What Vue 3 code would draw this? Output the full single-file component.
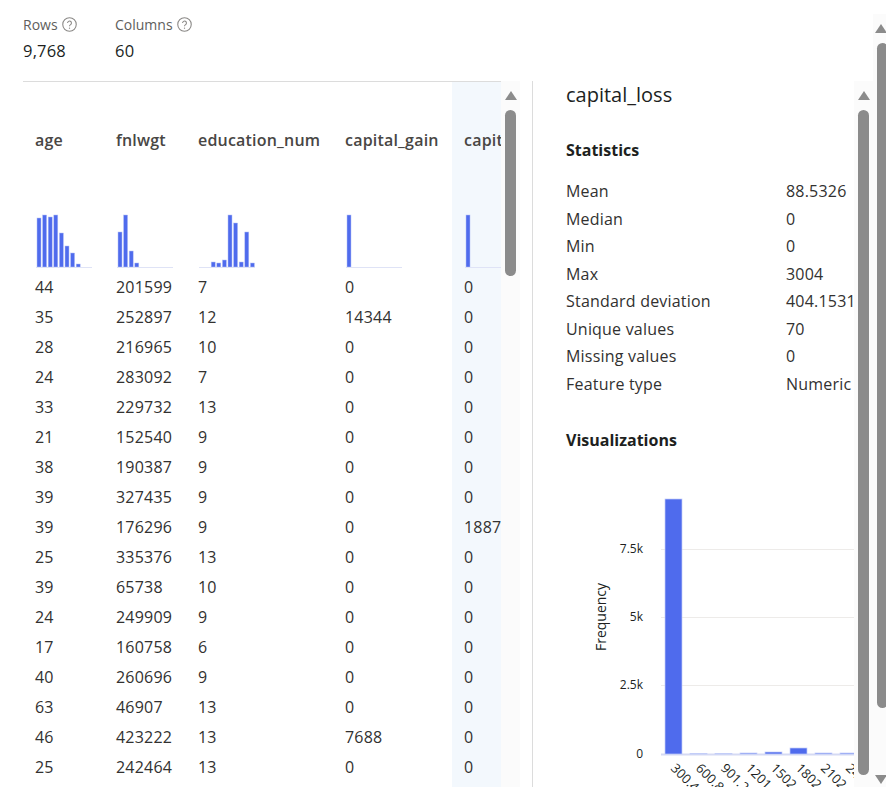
<script setup>
const rows = [
  [44, 201599, 7, 0, 0], [35, 252897, 12, 14344, 0], [28, 216965, 10, 0, 0], [24, 283092, 7, 0, 0],
  [33, 229732, 13, 0, 0], [21, 152540, 9, 0, 0], [38, 190387, 9, 0, 0], [39, 327435, 9, 0, 0],
  [39, 176296, 9, 0, 1887], [25, 335376, 13, 0, 0], [39, 65738, 10, 0, 0], [24, 249909, 9, 0, 0],
  [17, 160758, 6, 0, 0], [40, 260696, 9, 0, 0], [63, 46907, 13, 0, 0], [46, 423222, 13, 7688, 0],
  [25, 242464, 13, 0, 0]
]
const columns = [
  { name: 'age', hist: [49, 52, 50, 52, 34, 21, 14, 3, 0, 0] },
  { name: 'fnlwgt', hist: [35, 52, 16, 4, 0, 0, 0, 0, 0, 0] },
  { name: 'education_num', hist: [0, 0, 5, 4, 7, 52, 44, 5, 35, 4] },
  { name: 'capital_gain', hist: [52, 0, 0, 0, 0, 0, 0, 0, 0, 0] },
  { name: 'capital_loss', hist: [52, 0, 0, 0, 0, 0, 0, 0, 0, 0], active: true }
]
const stats = [
  ['Mean', '88.5326'], ['Median', '0'], ['Min', '0'], ['Max', '3004'],
  ['Standard deviation', '404.1531'], ['Unique values', '70'], ['Missing values', '0'], ['Feature type', 'Numeric']
]
const yTicks = [
  { label: '7.5k', y: 69 }, { label: '5k', y: 137 }, { label: '2.5k', y: 205 }, { label: '0', y: 274 }
]
const chartBars = [255, 0.5, 0.5, 1, 2, 6, 1, 1]
const xLabels = ['300.4', '600.8', '901.2', '1201.6', '1502', '1802.4', '2102.8', '2403.2']
</script>

<template>
  <div class="page">
    <main class="main">
      <header class="summary">
        <div class="metric">
          <div class="metric-label">Rows
            <svg class="help" viewBox="0 0 14 14"><circle cx="7" cy="7" r="6.3" /><path d="M5.2 5.6a1.8 1.8 0 1 1 2.8 1.5c-.7.5-1 .8-1 1.5" /><circle class="dot" cx="7" cy="10.4" r=".6" /></svg>
          </div>
          <div class="metric-value">9,768</div>
        </div>
        <div class="metric">
          <div class="metric-label">Columns
            <svg class="help" viewBox="0 0 14 14"><circle cx="7" cy="7" r="6.3" /><path d="M5.2 5.6a1.8 1.8 0 1 1 2.8 1.5c-.7.5-1 .8-1 1.5" /><circle class="dot" cx="7" cy="10.4" r=".6" /></svg>
          </div>
          <div class="metric-value">60</div>
        </div>
      </header>

      <div class="workspace">
        <section class="table-pane">
          <div class="table">
            <div v-for="(col, c) in columns" :key="col.name" class="col" :class="['col-' + c, { active: col.active }]">
              <div class="col-name">{{ col.name }}</div>
              <svg class="hist" width="57" height="54" viewBox="0 0 57 54">
                <rect v-for="(h, i) in col.hist" :key="i" v-show="h" class="hist-bar" :x="2 + i * 5.6" :y="53 - h" width="4" :height="h" />
                <line class="hist-base" x1="1" y1="53.5" x2="57" y2="53.5" />
              </svg>
              <div v-for="(row, r) in rows" :key="r" class="cell">{{ row[c] }}</div>
            </div>
          </div>
        </section>
        <div class="scrollbar">
          <span class="arrow up"></span>
          <span class="thumb table-thumb"></span>
        </div>

        <section class="detail-pane">
          <h2 class="detail-title">capital_loss</h2>
          <h3 class="section-title stats-title">Statistics</h3>
          <div class="stats">
            <div v-for="s in stats" :key="s[0]" class="stat">
              <span class="stat-key">{{ s[0] }}</span>
              <span class="stat-value">{{ s[1] }}</span>
            </div>
          </div>
          <h3 class="section-title viz-title">Visualizations</h3>
          <svg class="chart" width="288" height="340" viewBox="0 0 288 340">
            <text class="axis-title" transform="translate(40 137) rotate(-90)" text-anchor="middle">Frequency</text>
            <g v-for="t in yTicks" :key="t.label">
              <text class="y-label" x="77" :y="t.y + 4" text-anchor="end">{{ t.label }}</text>
              <line class="grid" :class="{ base: t.label === '0' }" x1="95" :y1="t.y + 0.5" x2="288" :y2="t.y + 0.5" />
            </g>
            <rect v-for="(h, i) in chartBars" :key="'b' + i" class="chart-bar" :x="99 + i * 25" :y="274 - h" width="17" :height="h" />
            <text v-for="(l, i) in xLabels" :key="l" class="x-label" :transform="`translate(${104 + i * 25} 289) rotate(45)`">{{ l }}</text>
          </svg>
        </section>
        <div class="scrollbar">
          <span class="arrow up"></span>
          <span class="thumb detail-thumb"></span>
        </div>
      </div>
    </main>
    <div class="scrollbar page-bar">
      <span class="arrow up"></span>
      <span class="thumb page-thumb"></span>
      <span class="arrow down"></span>
    </div>
  </div>
</template>

<style>
html, body { margin: 0; background: #fff; overflow: hidden; }
</style>

<style scoped>
.page {
  display: flex;
  width: 886px;
  height: 787px;
  overflow: hidden;
  font-family: "Open Sans", "Noto Sans", sans-serif;
  font-size: 16px;
  letter-spacing: .2px;
  color: #323130;
  background: #fff;
}
.main { width: 873px; flex: none; padding-left: 23px; box-sizing: border-box; }
.summary { display: flex; height: 81px; box-sizing: border-box; padding-top: 14px; }
.metric { width: 92px; }
.metric-label { display: flex; align-items: center; gap: 4px; height: 20px; font-size: 14px; letter-spacing: 0; color: #605e5c; }
.metric-value { margin-top: 6px; height: 22px; line-height: 22px; font-size: 16.5px; color: #201f1e; }
.help { width: 15px; height: 15px; fill: none; stroke: #8a8886; stroke-width: 1; }
.help .dot { fill: #8a8886; stroke: none; }

.workspace { display: flex; height: 706px; }
.table-pane { width: 478px; flex: none; overflow: hidden; border-top: 1px solid #dcdcdc; box-sizing: border-box; }
.table { display: flex; height: 100%; }
.col { flex: none; padding-left: 12px; box-sizing: border-box; }
.col-0 { width: 81px; }
.col-1 { width: 82px; }
.col-2 { width: 147px; }
.col-3 { width: 119px; }
.col-4 { width: 120px; }
.col.active { background: #f3f8fd; }
.col-name { height: 132px; padding-top: 46px; box-sizing: border-box; line-height: 24px; font-weight: 600; color: #484644; white-space: nowrap; }
.hist { display: block; margin-bottom: 4px; }
.hist-bar { fill: #4f6bed; stroke: #b4c0f5; stroke-width: .5; }
.hist-base { stroke: #dfe3f6; stroke-width: 1; }
.cell { height: 30px; line-height: 30px; white-space: nowrap; }

.scrollbar { display: flex; flex-direction: column; align-items: center; width: 19px; flex: none; background: #fbfbfb; box-sizing: border-box; padding-top: 10px; }
.arrow { width: 0; height: 0; border-left: 6.5px solid transparent; border-right: 6.5px solid transparent; flex: none; }
.arrow.up { border-bottom: 9px solid #8b8b8b; }
.arrow.down { border-top: 9px solid #8b8b8b; margin-top: 67px; }
.thumb { width: 11px; margin-top: 10px; border-radius: 6px; background: #8b8b8b; flex: none; }
.table-thumb { height: 166px; }
.detail-thumb { height: 665px; }

.detail-pane { width: 322px; flex: none; margin-left: 12px; padding: 1px 0 0 33px; border-left: 1px solid #dcdcdc; box-sizing: border-box; overflow: hidden; white-space: nowrap; }
.detail-title { margin: 0; height: 28px; line-height: 26px; font-size: 20px; font-weight: 400; letter-spacing: 0; color: #201f1e; }
.section-title { margin: 0; height: 24px; line-height: 24px; font-size: 16px; font-weight: 700; letter-spacing: 0; color: #201f1e; }
.stats-title { margin-top: 28px; }
.stats { margin-top: 16px; }
.stat { display: flex; height: 27.5px; line-height: 27.5px; }
.stat-key { width: 220px; flex: none; }
.viz-title { margin-top: 30px; }
.chart { display: block; margin-top: 28px; }
.axis-title { font-size: 14px; letter-spacing: 0; fill: #201f1e; }
.y-label { font-size: 12px; letter-spacing: 0; fill: #201f1e; }
.x-label { font-size: 13px; letter-spacing: 0; fill: #201f1e; }
.grid { stroke: #edebe9; stroke-width: 1; }
.grid.base { stroke: #d5daf3; stroke-width: 2; }
.chart-bar { fill: #4f6bed; stroke: #c3cdf8; stroke-width: .7; }

.page-bar { width: 13px; margin-top: 14px; height: 773px; align-items: flex-start; padding-left: 2px; }
.page-bar .thumb { margin-left: 2px; }
.page-thumb { height: 665px; }
</style>
